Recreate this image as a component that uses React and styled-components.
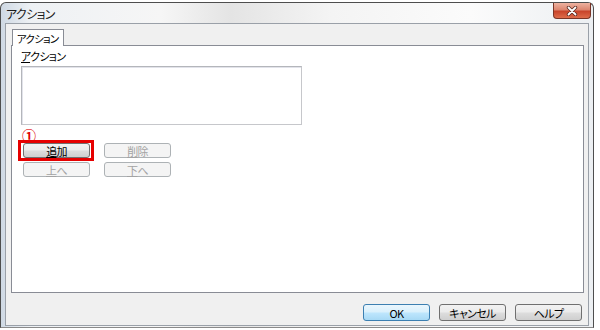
import styled, { createGlobalStyle, css } from "styled-components";

const Global = createGlobalStyle`
  html, body {
    margin: 0;
    padding: 0;
    background: #ffffff;
  }
  body {
    font-family: "Noto Sans CJK JP", "Noto Sans", sans-serif;
    font-size: 11px;
    font-feature-settings: "palt" 1;
    letter-spacing: -0.06em;
    color: #000;
  }
`;

const Window = styled.div`
  box-sizing: border-box;
  width: 594px;
  height: 326px;
  margin-top: 2px;
  border: 1px solid #4e4e4e;
  border-bottom-color: #8a8a8a;
  border-radius: 6px 6px 0 0;
  background: linear-gradient(
    90deg,
    #cfd9e4 0px,
    #eef1f4 30px,
    #f6f6f6 160px,
    #e4e4e4 230px,
    #f4f4f4 330px,
    #fbfbfb 470px,
    #eceff2 594px
  );
  display: flex;
  flex-direction: column;
  padding: 0 4px 1px 4px;
`;

const TitleBar = styled.div`
  height: 21px;
  display: flex;
  align-items: center;
  justify-content: space-between;
`;

const Title = styled.span`
  font-size: 12px;
  padding-left: 1px;
  padding-top: 1px;
  color: #1a1a1a;
`;

const CloseButton = styled.div`
  width: 36px;
  height: 15px;
  margin-right: -2px;
  border: 1px solid #7a3526;
  border-top: none;
  border-radius: 0 0 4px 4px;
  background: linear-gradient(#eeb2a0 0%, #dc8670 45%, #c8442a 55%, #de6c4a 100%);
  display: flex;
  align-items: center;
  justify-content: center;
  align-self: flex-start;
`;

const Client = styled.div`
  flex: 1;
  background: #f0f0f0;
  border: 1px solid #9aa0a8;
  display: flex;
  flex-direction: column;
  padding: 5px 4px 4px 5px;
`;

const Tabs = styled.div`
  display: flex;
  flex-direction: column;
  height: 264px;
`;

const TabStrip = styled.div`
  display: flex;
  padding-left: 1px;
`;

const Tab = styled.div`
  height: 16px;
  padding: 0 5px 0 4px;
  display: flex;
  align-items: center;
  font-size: 10.5px;
  letter-spacing: -0.08em;
  background: #ffffff;
  border: 1px solid #898c95;
  border-bottom: none;
  margin-bottom: -1px;
  position: relative;
  z-index: 1;
`;

const Panel = styled.div`
  flex: 1;
  background: #ffffff;
  border: 1px solid #898c95;
  padding: 3px 9px;
  display: flex;
  flex-direction: column;
`;

const Label = styled.div`
  height: 15px;
  line-height: 14px;
  margin-bottom: 2px;
`;

const Mn = styled.span`
  text-decoration: underline;
  text-underline-offset: 1px;
`;

const ListBox = styled.div`
  width: 281px;
  height: 59px;
  box-sizing: border-box;
  border: 1px solid #b4b6bb;
  border-right-color: #c6c7cb;
  border-bottom-color: #c6c7cb;
  box-shadow: inset 1px 1px 0 #e2e3ea;
  background: #fff;
`;

const Marker = styled.div`
  color: #e00000;
  font-size: 14px;
  font-weight: 700;
  height: 14px;
  line-height: 14px;
  margin: 3px 0 1px 1px;
`;

const ButtonGrid = styled.div`
  display: grid;
  grid-template-columns: 67px 67px;
  column-gap: 14px;
  row-gap: 4px;
  padding-left: 2px;
`;

const Button = styled.div`
  box-sizing: border-box;
  width: 67px;
  height: 15px;
  display: flex;
  align-items: center;
  justify-content: center;
  border-radius: 3px;
  border: 1px solid #707070;
  background: linear-gradient(#f2f2f2 0%, #ebebeb 48%, #dddddd 52%, #cfcfcf 100%);
  color: #000;
  font-size: 11px;
  position: relative;
  ${(p) =>
    p.$disabled &&
    css`
      border-color: #adb2b5;
      background: #f4f4f4;
      color: #a3a3a3;
    `}
  ${(p) =>
    p.$default &&
    css`
      border-color: #3c7fb1;
      background: linear-gradient(#eaf6fd 0%, #d9f0fc 48%, #bee6fd 52%, #a7d9f5 100%);
    `}
  ${(p) =>
    p.$marked &&
    css`
      &::after {
        content: "";
        position: absolute;
        top: -4px;
        bottom: -4px;
        left: -6px;
        right: -5px;
        border: 3px solid #e60000;
      }
    `}
`;

const Footer = styled.div`
  display: flex;
  justify-content: flex-end;
  gap: 9px;
  margin-top: 11px;
  padding-right: 2px;
`;

const FooterButton = styled(Button)`
  height: 17px;
`;

const CloseIcon = () => (
  <svg width="12" height="10" viewBox="0 0 12 10">
    <path
      d="M2.5 1.5 L9.5 8.5 M9.5 1.5 L2.5 8.5"
      stroke="#5a2a20"
      strokeWidth="3.4"
      fill="none"
      strokeLinecap="round"
    />
    <path
      d="M2.5 1.5 L9.5 8.5 M9.5 1.5 L2.5 8.5"
      stroke="#ffffff"
      strokeWidth="1.8"
      fill="none"
      strokeLinecap="round"
    />
  </svg>
);

export default function App() {
  return (
    <>
      <Global />
      <Window>
        <TitleBar>
          <Title>アクション</Title>
          <CloseButton>
            <CloseIcon />
          </CloseButton>
        </TitleBar>
        <Client>
          <Tabs>
            <TabStrip>
              <Tab>アクション</Tab>
            </TabStrip>
            <Panel>
              <Label>
                <Mn>ア</Mn>クション
              </Label>
              <ListBox />
              <Marker>①</Marker>
              <ButtonGrid>
                <Button $marked>
                  <Mn>追</Mn>加
                </Button>
                <Button $disabled>
                  <Mn>削</Mn>除
                </Button>
                <Button $disabled>
                  <Mn>上</Mn>へ
                </Button>
                <Button $disabled>
                  <Mn>下</Mn>へ
                </Button>
              </ButtonGrid>
            </Panel>
          </Tabs>
          <Footer>
            <FooterButton $default>OK</FooterButton>
            <FooterButton>キャンセル</FooterButton>
            <FooterButton>ヘルプ</FooterButton>
          </Footer>
        </Client>
      </Window>
    </>
  );
}
